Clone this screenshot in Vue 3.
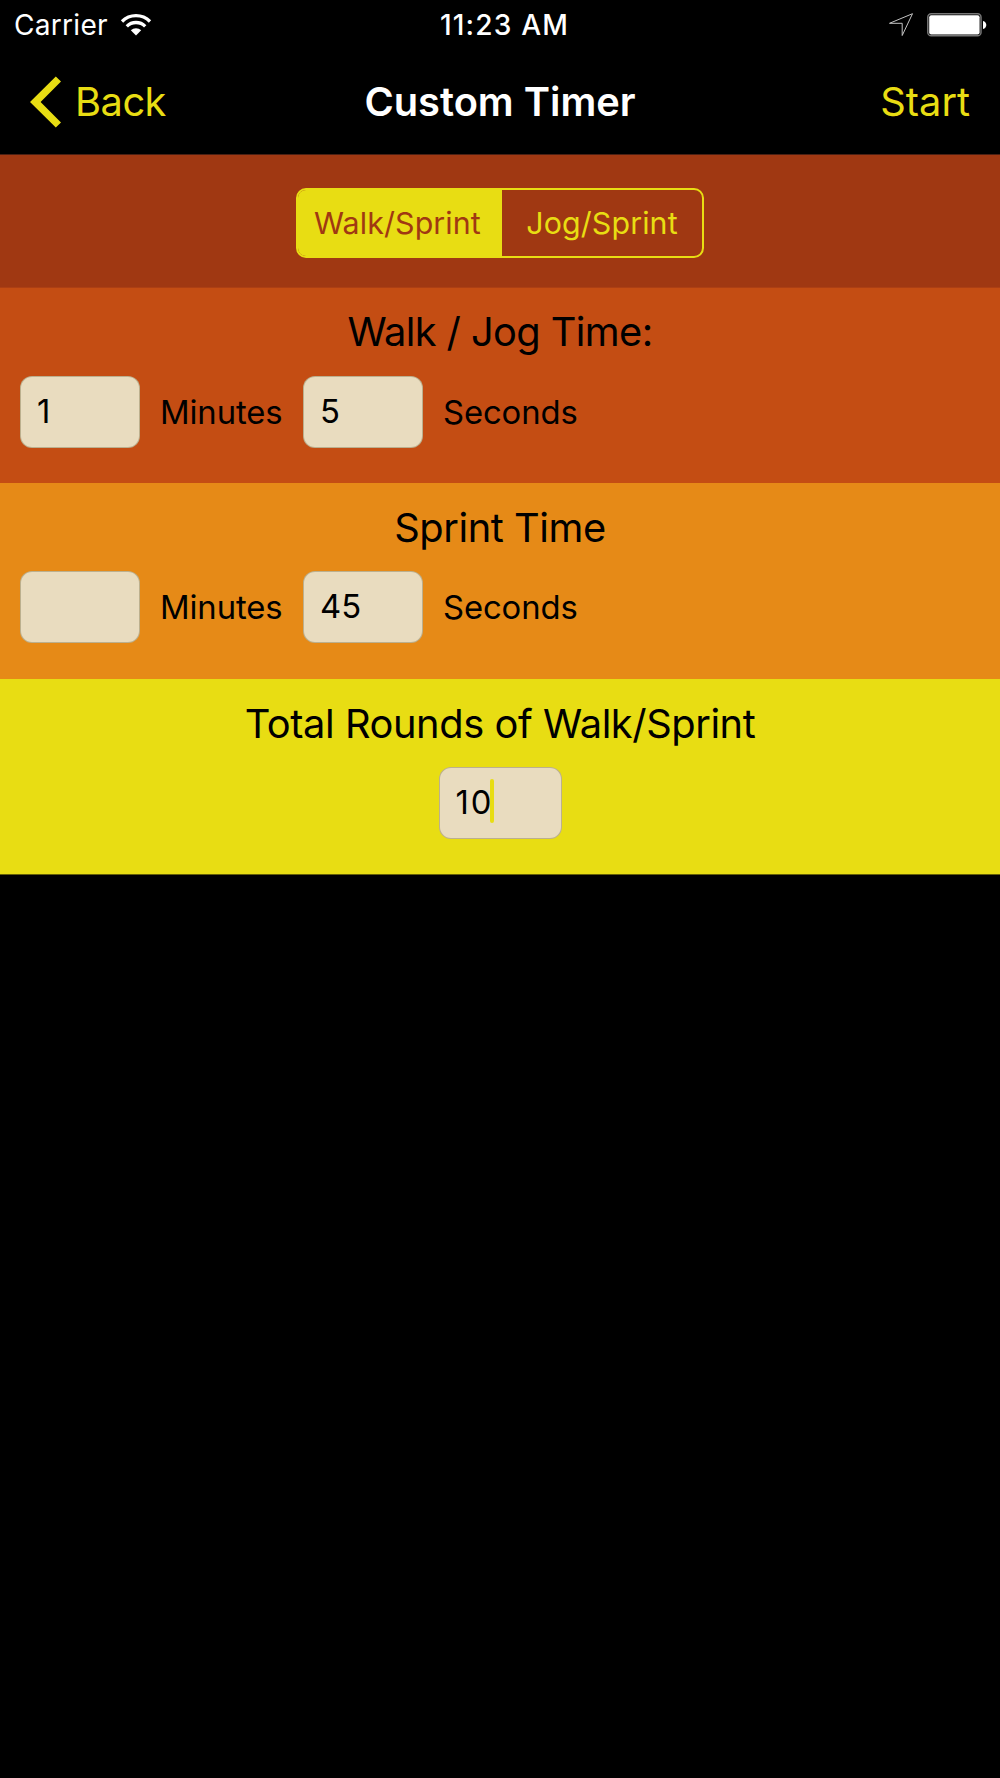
<script setup>
import {
  reactive,
  ref
} from 'vue'


const modes = [
  'Walk/Sprint',
  'Jog/Sprint'
]

const mode =
    ref('Walk/Sprint')


const intervals =
    reactive([
      {
        id: 'walk',
        title: 'Walk / Jog Time:',
        minutes: '1',
        seconds: '5'
      },
      {
        id: 'sprint',
        title: 'Sprint Time',
        minutes: '',
        seconds: '45'
      }
    ])


const rounds =
    ref('10')
</script>


<template>
  <main class="screen">
    <header class="status">
      <div class="carrier">
        <span class="carrier-name">Carrier</span>

        <svg class="wifi" width="32" height="24" viewBox="0 0 32 24">
          <g fill="none" stroke="#fff" stroke-width="3.3">
            <path d="M2 8.5A19.8 19.8 0 0 1 30 8.5" />
            <path d="M6.8 13.3A13 13 0 0 1 25.2 13.3" />
          </g>
          <path d="M16 22.5L10.8 17.3A7.4 7.4 0 0 1 21.2 17.3Z" fill="#fff" />
        </svg>
      </div>

      <span class="clock">11:23 AM</span>

      <div class="indicators">
        <svg width="26" height="26" viewBox="0 0 26 26">
          <path
              d="M24.5 1.7L1.5 11.3H14.2V23.5Z"
              fill="none"
              stroke="#c4c4c4"
              stroke-width="1"
          />
        </svg>

        <svg class="battery" width="60" height="24" viewBox="0 0 60 24">
          <rect x=".8" y=".8" width="53.2" height="22" rx="3.4" fill="none" stroke="#777" stroke-width="1.5" />
          <rect x="2.2" y="2.2" width="50.4" height="19.4" rx="2" fill="#fff" />
          <path d="M56 8C60.4 9 60.4 15 56 16Z" fill="#fff" />
        </svg>
      </div>
    </header>


    <nav class="navbar">
      <button type="button" class="back">
        <svg width="32" height="52" viewBox="0 0 32 52">
          <path d="M25.8 .6L31 5.6L10.6 26L31 46.4L25.8 51.4L0 26Z" fill="#e8dd13" />
        </svg>

        <span class="back-text">Back</span>
      </button>

      <h1>Custom Timer</h1>

      <button type="button" class="start">Start</button>
    </nav>


    <section class="mode">
      <div class="segmented">
        <button
            v-for="item in modes"
            :key="item"
            type="button"
            :class="{
            active:
              mode === item
          }"
            @click="mode = item"
        >
          {{ item }}
        </button>
      </div>
    </section>


    <section
        v-for="interval in intervals"
        :key="interval.id"
        class="band"
        :class="interval.id"
    >
      <h2>{{ interval.title }}</h2>

      <div class="fields">
        <input v-model="interval.minutes" type="text">
        <span class="minutes">Minutes</span>

        <input v-model="interval.seconds" type="text">
        <span class="seconds">Seconds</span>
      </div>
    </section>


    <section class="band rounds">
      <h2>Total Rounds of Walk/Sprint</h2>

      <div class="rounds-field">
        <input v-model="rounds" type="text">
        <i class="caret"></i>
      </div>
    </section>
  </main>
</template>


<style>
body {
  background: #000;
}
</style>


<style scoped>
.screen {
  width: 1000px;
  height: 1778px;

  overflow: hidden;

  background: #000;
  color: #000;

  font-family:
      Inter,
      "Liberation Sans",
      sans-serif;
}


button,
input {
  margin: 0;
  padding: 0;

  border: 0;
  outline: none;

  background: none;

  font: inherit;
}


svg {
  display: block;
}


.status,
.navbar {
  display: grid;

  grid-template-columns:
    1fr
    auto
    1fr;

  align-items: center;
}


.status {
  height: 50px;

  color: #fff;

  font-size: 28.1px;
  line-height: 50px;
}


.carrier {
  display: flex;
  align-items: center;

  gap: 12px;

  padding-left: 14px;
}


.carrier-name {
  width: 94px;

  letter-spacing: .25px;
  white-space: nowrap;
}


.clock {
  padding-left: 9px;

  font-weight: 500;
  letter-spacing: 1.15px;
}


.indicators {
  display: flex;
  align-items: center;
  justify-content: flex-end;

  gap: 13px;

  padding-right: 13px;
}


.navbar {
  height: 104px;

  border-bottom:
      1px solid
      #4d2013;

  font-size: 39.8px;
}


.back,
.start,
h1 {
  padding-bottom: 2px;
}


.back,
.start {
  color: #e8dd13;
}


.back {
  display: flex;
  align-items: center;

  gap: 13px;

  padding-left: 30px;

  letter-spacing: -.5px;
}


.back svg {
  margin-top: 2px;
}


h1,
h2 {
  margin: 0;

  font-size: 39.8px;
}


h1 {
  color: #fff;

  font-weight: 600;
}


.start {
  justify-self: end;

  padding-right: 30px;
}


.mode {
  height: 133px;

  display: flex;
  justify-content: center;

  box-sizing: border-box;

  padding-top: 33px;

  border-bottom:
      1px solid
      #ad3f13;

  background: #a03812;
}


.segmented {
  width: 408px;
  height: 70px;

  display: grid;

  grid-template-columns:
    204px
    1fr;

  box-sizing: border-box;

  overflow: hidden;

  border:
      2px solid
      #e8dd13;

  border-radius: 10px;
}


.segmented button {
  padding-bottom: 1px;

  color: #e8dd13;

  font-size: 30.4px;
  letter-spacing: .1px;
}


.segmented .active {
  padding-right: 5px;

  background: #e8dd13;

  color: #a03812;
}


.band {
  height: 196px;
}


.walk {
  height: 195px;

  background: #c44d13;
}


.sprint {
  background: #e68a17;
}


.rounds {
  height: 195px;

  border-bottom:
      1px solid
      #656007;

  background: #e8dd13;
}


h2 {
  height: 88px;

  font-weight: 400;
  letter-spacing: -.43px;
  line-height: 90px;
  text-align: center;
}


.walk h2 {
  letter-spacing: -.6px;
  line-height: 88px;
}


.fields {
  display: flex;
  align-items: center;

  padding-left: 20px;
}


.fields span {
  width: 143px;

  padding-left: 20px;

  font-size: 32.8px;
  letter-spacing: -.1px;
}


input {
  width: 120px;
  height: 72px;

  box-sizing: border-box;

  padding:
      0 16px
      3px;

  border:
      1px solid
      rgba(120, 110, 70, .4);

  border-radius: 12px;

  background: #e9dcbf;

  font-size: 32.8px;
}


.rounds-field {
  position: relative;

  width: 123px;

  margin: 0 auto;
}


.rounds-field input {
  width: 123px;

  letter-spacing: 2px;
}


.caret {
  position: absolute;

  top: 12px;
  left: 51px;

  width: 4px;
  height: 44px;

  border-radius: 2px;

  background: #e8dd13;
}
</style>
